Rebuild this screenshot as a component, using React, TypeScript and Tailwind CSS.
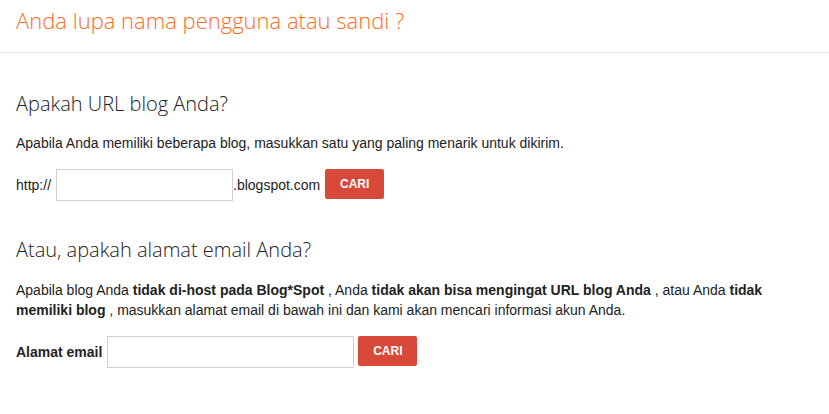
export default function App() {
  const light = { fontFamily: '"Open Sans", sans-serif' };
  return (
    <div className="min-h-[414px] bg-white text-[14px] text-[#222]" style={{ fontFamily: '"Liberation Sans", Arial, sans-serif' }}>
      {/* header */}
      <div className="border-b border-[#e5e5e5] px-4 pt-[5px] h-[53px]">
        <h1 className="text-[22px] font-light leading-[30px] text-[#fb6d1f]" style={light}>
          Anda lupa nama pengguna atau sandi ?
        </h1>
      </div>

      <div className="px-4">
        {/* URL section */}
        <h2 className="mt-[38px] text-[20px] font-light leading-[26px] text-[#222]" style={light}>
          Apakah URL blog Anda?
        </h2>
        <p className="mt-[17px] leading-[18px]">
          Apabila Anda memiliki beberapa blog, masukkan satu yang paling menarik untuk dikirim.
        </p>
        <div className="mt-[17px] flex items-start">
          <span className="mt-[6px] mr-[5px]">http://</span>
          <input className="h-[32px] w-[177px] border border-[#d0d0d0] outline-none px-2" />
          <span className="mt-[6px]">.blogspot.com</span>
          <button className="ml-[5px] h-[30px] w-[59px] rounded-[2px] bg-[#d9493a] text-[12px] font-bold text-white">
            CARI
          </button>
        </div>

        {/* Email section */}
        <h2 className="mt-[36px] text-[20px] font-light leading-[26px] text-[#222]" style={light}>
          Atau, apakah alamat email Anda?
        </h2>
        <p className="mt-[17px] leading-[20px]">
          Apabila blog Anda <b>tidak di-host pada Blog*Spot</b> , Anda <b>tidak akan bisa mengingat URL blog Anda</b> , atau Anda <b>tidak memiliki blog</b> , masukkan alamat email di bawah ini dan kami akan mencari informasi akun Anda.
        </p>
        <div className="mt-[16px] flex items-start">
          <span className="mt-[6px] mr-[5px] font-bold">Alamat email</span>
          <input className="h-[32px] w-[247px] border border-[#d0d0d0] outline-none px-2" />
          <button className="ml-[4px] h-[30px] w-[59px] rounded-[2px] bg-[#d9493a] text-[12px] font-bold text-white">
            CARI
          </button>
        </div>
      </div>
    </div>
  );
}
